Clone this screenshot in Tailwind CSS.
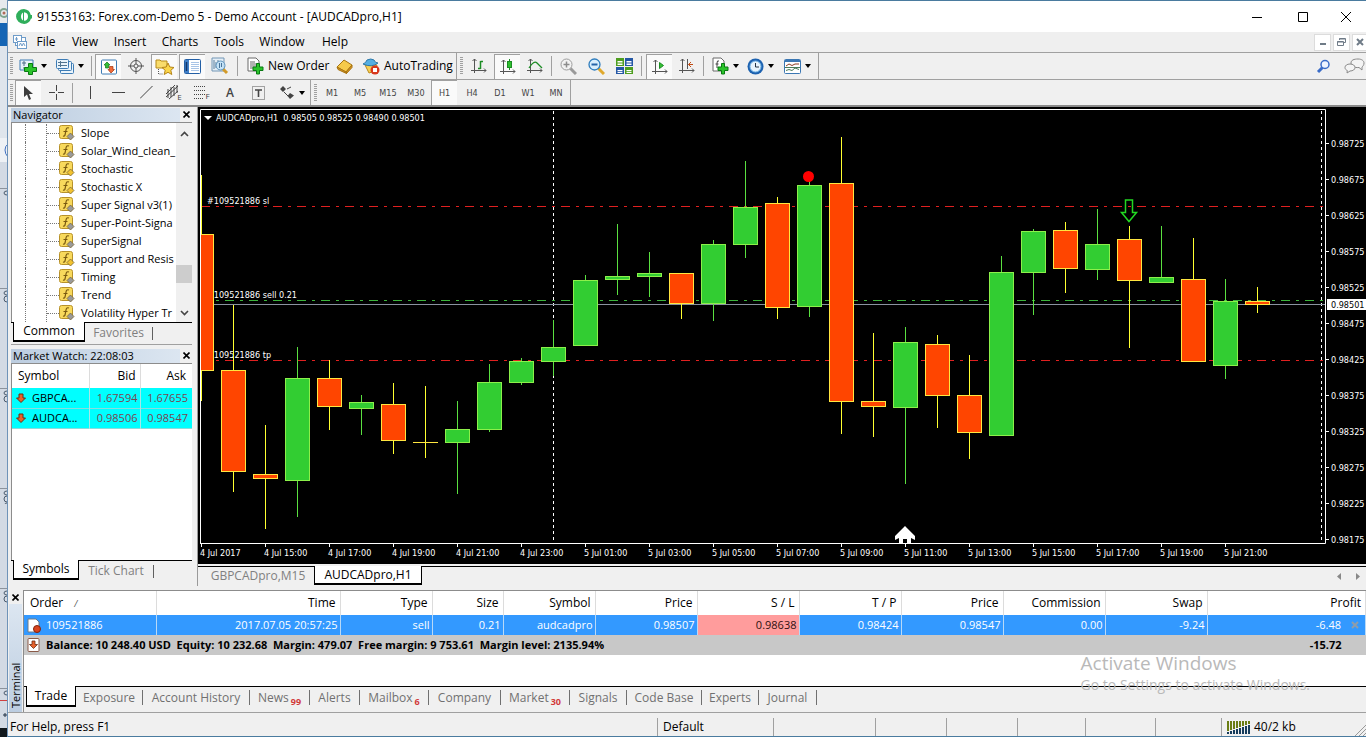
<!DOCTYPE html>
<html lang="en">
<head>
<meta charset="utf-8">
<title>91553163: Forex.com-Demo 5 - Demo Account - [AUDCADpro,H1]</title>
<script src="https://cdn.jsdelivr.net/npm/@tailwindcss/browser@4"></script>
</head>
<body class="flex min-h-screen bg-[#f0f0f0] font-['Open_Sans','Noto_Sans',sans-serif] text-[12px] leading-4 text-black">

<!-- Edge of the window behind -->
<div class="relative w-2 shrink-0 overflow-hidden border-r border-[#6f93b8] bg-[#d3dae4]">
  <svg class="absolute inset-0" width="8" height="737" viewBox="0 0 8 737" aria-hidden="true">
    <rect width="8" height="23" fill="#e6eaed"/><circle cx="4" cy="13" r="4" fill="none" stroke="#7fa58f" stroke-width="2"/><circle cx="4" cy="13" r="1.5" fill="#b06a58"/>
    <rect y="23" width="8" height="23" fill="#1565b5"/><rect y="46" width="8" height="92" fill="#dfe5ec"/>
    <rect y="138" width="8" height="24" fill="#eef1f5"/><path d="M8 144q-3 2-3 6t3 7" stroke="#3f6fc0" fill="none"/>
    <path d="M0 188.500h8M0 288.500h8M0 388.500h8M0 488.500h8M0 588.500h8M0 688.500h8" stroke="#8c939c"/>
    <g fill="none" stroke="#4b5a6c"><path d="M7 191q-3 0-3 2t3 2M7 291q-3 0-3 2t3 2m0 1q-3 0-3 3t3 3M7 391q-3 0-3 2t3 2m0 1q-3 0-3 3t3 3M7 491q-3 0-3 2t3 2m0 1q-3 0-3 3t3 3m0 1q-2 0-2 1M7 591q-3 0-3 2t3 2m0 1q-3 0-3 3t3 3M7 691q-3 0-3 2t3 2"/></g>
    <path d="M0 700.500h8" stroke="#d04040"/><path d="M5 713v4M3 715h4" stroke="#234"/><rect y="728" width="8" height="9" fill="#10171c"/>
  </svg>
</div>

<div class="flex min-w-0 flex-1 flex-col border-y border-[#4a7b9f]">

  <!-- Title bar -->
  <header class="flex h-[31px] shrink-0 items-center bg-white pl-2">
    <svg class="mr-1 shrink-0" width="17" height="16" viewBox="0 0 17 16" aria-hidden="true"><path fill="#2fae5b" fill-rule="evenodd" d="M8 0a8 7.500 0 1 0 .1 15A8 7.500 0 0 0 15 9.500h1V6h-1.200A8 7.500 0 0 0 8 0zM8 3.200q4 .3 4 4.300t-4 4.300q-3-.8-3-4.300t3-4.300z"/><path fill="#2fae5b" d="M7 3h1v9H7z"/></svg>
    <h1 class="flex-1 text-[12px]">91553163: Forex.com-Demo 5 - Demo Account - [AUDCADpro,H1]</h1>
    <button aria-label="Minimize" class="flex w-[46px] justify-center"><svg width="10" height="10" stroke="#000" fill="none"><path d="M0 5.500h10"/></svg></button>
    <button aria-label="Maximize" class="flex w-[46px] justify-center"><svg width="10" height="10" stroke="#000" fill="none"><path d="M.5.500h9v9h-9z"/></svg></button>
    <button aria-label="Close" class="flex w-10 justify-center"><svg width="10" height="10" stroke="#000" fill="none"><path d="M0 0l10 10M10 0L0 10"/></svg></button>
  </header>

  <!-- Menu bar -->
  <nav class="flex h-[21px] shrink-0 items-center border-b border-[#a0a0a0] bg-[#efefef] pl-1">
    <svg width="16" height="16" viewBox="0 0 16 16" fill="#fff" stroke="#6e9cc9" aria-hidden="true"><rect x="3.500" y="3.500" width="10" height="8"/><rect x="1.500" y="1.500" width="8" height="7"/><path d="M3 5h3M4.500 3v4" fill="none"/><rect x="5.500" y="7.500" width="9" height="7"/><path d="M7 12l1.500-3 1.500 3 1.500-3 1.500 3" fill="none"/></svg>
    <button class="w-9 text-center">File</button>
    <button class="w-[42px] text-center">View</button>
    <button class="w-[48px] text-center">Insert</button>
    <button class="w-[52px] text-center">Charts</button>
    <button class="w-[46px] text-center">Tools</button>
    <button class="w-[60px] text-center">Window</button>
    <button class="w-[46px] text-center">Help</button>
    <div class="ml-auto flex gap-[2px]">
      <button aria-label="Minimize chart" class="flex h-[17px] w-[17px] items-center justify-center border border-[#dcdcdc] bg-white"><svg width="8" height="8"><path d="M1 6h6" stroke="#6f7b87" stroke-width="2"/></svg></button>
      <button aria-label="Restore chart" class="flex h-[17px] w-[17px] items-center justify-center border border-[#dcdcdc] bg-white"><svg width="9" height="8" fill="none" stroke="#6f7b87"><path d="M2.500 2V.5h6v4H7M.500 3.500h6v4h-6zM2 1h6M0 4h6"/></svg></button>
      <button aria-label="Close chart" class="flex h-[17px] w-[14px] items-center justify-center border border-r-0 border-[#dcdcdc] bg-white"><svg width="8" height="8"><path d="M1 1l6 6M7 1L1 7" stroke="#6f7b87" stroke-width="2"/></svg></button>
    </div>
  </nav>

  <!-- Main toolbar -->
  <div class="flex h-[27px] shrink-0 items-center border-b border-[#a0a0a0] bg-[#f0f0f0]">
    <div class="flex h-full items-center border-r border-[#a0a0a0]">
      <i class="ml-[2px] mr-1 h-[18px] w-[3px] bg-[repeating-linear-gradient(#a0a0a0_0_1px,transparent_1px_2px)]"></i>
      <button aria-label="New chart" class="flex w-[34px] items-center gap-1 pl-[2px]"><svg width="18" height="17" viewBox="0 0 18 17"><path d="M1 2h13v10H1z" fill="#e6f1fa" stroke="#3e7cb5"/><path d="M3 5h4M5 3v5M4 10h4" stroke="#4b6c88"/><path d="M9.500 5.500h4v4h4v4h-4v3h-4v-3h-4v-4h4z" fill="#2bc32b" stroke="#087a12"/></svg><svg width="6" height="4"><path d="M0 0h6L3 4z"/></svg></button>
      <button aria-label="Profiles" class="flex w-[38px] items-center gap-1 pl-[5px]"><svg width="18" height="17" viewBox="0 0 18 17" fill="#eaf4fb" stroke="#3e7cb5"><rect x="4.500" y="5.500" width="13" height="10" rx="1"/><rect x="2.500" y="3.500" width="13" height="9" rx="1"/><rect x=".5" y="1.500" width="12" height="9" rx="1"/><path d="M2 4.500h9M2 7.500h9M4.500 3v6" stroke="#537590"/></svg><svg width="6" height="4"><path d="M0 0h6L3 4z"/></svg></button>
      <i class="mx-[2px] h-5 w-px bg-[#a0a0a0]"></i>
      <button aria-label="Market Watch" aria-pressed="true" class="mx-px flex h-[25px] w-[26px] items-center justify-center border-l border-t border-[#a0a0a0] bg-[#fafafa]"><svg width="16" height="16" viewBox="0 0 16 16"><rect x=".5" y="1" width="15" height="14" rx="1" fill="#fff" stroke="#3e7cb5"/><path d="M6 3l3 3H7.500v3h-3V6H3z" fill="#35bf35" stroke="#11761a" stroke-width=".7"/><path d="M10 14l3.500-3.500H12v-3H8.500v3H7z" fill="#f06b3a" stroke="#a0320d" stroke-width=".7"/></svg></button>
      <button aria-label="Data Window" class="flex w-7 justify-center"><svg width="16" height="16" viewBox="0 0 16 16" fill="none" stroke="#555"><circle cx="8" cy="8" r="5.500"/><circle cx="8" cy="8" r="2"/><path d="M8 0v6M8 10v6M0 8h6M10 8h6"/></svg></button>
      <button aria-label="Navigator" aria-pressed="true" class="mx-px flex h-[25px] w-[26px] items-center justify-center border-l border-t border-[#a0a0a0] bg-[#fafafa]"><svg width="20" height="18" viewBox="0 0 20 18"><path d="M1 2h4l1 1h6v7H1z" fill="#f9dc6b" stroke="#b58a1b"/><path d="M3.500 11v5H8" stroke="#555" stroke-dasharray="1 1" fill="none"/><path d="M13 5l1.800 4 4.200.5-3.200 2.800 1 4.200-3.800-2.200-3.800 2.200 1-4.200L7 9.500l4.200-.5z" fill="#fbd64a" stroke="#b58518"/></svg></button>
      <button aria-label="Terminal" aria-pressed="true" class="mx-px flex h-[25px] w-[26px] items-center justify-center border-l border-t border-[#a0a0a0] bg-[#fafafa]"><svg width="17" height="15" viewBox="0 0 17 15"><rect x=".5" y=".5" width="16" height="14" rx="1" fill="#fff" stroke="#235fa5"/><path d="M1 1h4v13H1z" fill="#3f7fc8"/><path d="M2.500 3v9" stroke="#12376b" stroke-width="1.500"/><path d="M7 3.500h8M7 5.500h8M7 7.500h8M7 9.500h8M7 11.500h8" stroke="#a8c4e6"/></svg></button>
      <button aria-label="Strategy Tester" class="flex w-7 justify-center"><svg width="18" height="18" viewBox="0 0 18 18"><path d="M1 1h12v13H1z" fill="#e4eef6" stroke="#7396b5"/><path d="M3 3v9M5 5v6M7 3v4" stroke="#5b7e9c"/><path d="M12 12l4 4" stroke="#d39b2a" stroke-width="3"/><circle cx="9.500" cy="8.500" r="4.500" fill="#bfe0f7" fill-opacity=".85" stroke="#5f94bd"/><path d="M8.500 6v5M10.500 6v4" stroke="#49749a"/></svg></button>
      <i class="mx-[3px] h-5 w-px bg-[#a0a0a0]"></i>
      <button class="flex w-[89px] items-center gap-1 whitespace-nowrap pl-[6px]"><svg class="shrink-0" width="17" height="18" viewBox="0 0 17 18"><path d="M1 1h8l3 3v10H1z" fill="#fff" stroke="#6b6b6b"/><path d="M3 5h5M3 7h7M3 9h6M3 11h4" stroke="#666"/><path d="M9.500 6.500h3v3.500h3.500v3.500h-3.500V17h-3v-3.500H6V10h3.500z" fill="#2bc32b" stroke="#087a12"/></svg>New Order</button>
      <button aria-label="MetaEditor" class="flex w-7 justify-center"><svg width="17" height="15" viewBox="0 0 17 15"><path d="M1 8L8 1l8 5-6 7z" fill="#f6ca4b" stroke="#a87412"/><path d="M1 8l1 2.500L10.500 14.500 10 13zM10.500 14.500l5.500-6V6L10 13z" fill="#d59422" stroke="#a87412"/></svg></button>
      <button class="flex w-[98px] items-center gap-1 whitespace-nowrap pl-1"><svg class="shrink-0" width="18" height="17" viewBox="0 0 18 17"><path d="M3 7l12 0-2 6-6 2z" fill="#f7cf52" stroke="#b98a1d"/><path d="M1 6q3-1 4-4 4-2 7 0 1 3 4 3-6 5-15 1z" fill="#54aee2" stroke="#2d78a8"/><circle cx="13" cy="12" r="4.500" fill="#d8371d"/><rect x="11" y="10" width="4" height="4" fill="#fff"/></svg>AutoTrading</button>
    </div>
    <div class="flex h-full items-center border-r border-[#a0a0a0]">
      <i class="ml-[3px] mr-[2px] h-[18px] w-[3px] bg-[repeating-linear-gradient(#a0a0a0_0_1px,transparent_1px_2px)]"></i>
      <button aria-label="Bar chart" class="flex w-7 justify-center"><svg width="16" height="16" fill="none" stroke="#555"><path d="M3.500 1v14M0 12.500h15M1.500 3l2-2 2 2M13 10.500l2 2-2 2"/><path d="M9.500 3v8M9.500 3.500H12M7 10.500h2.500" stroke="#1c8c24" stroke-width="1.500"/></svg></button>
      <button aria-label="Candlesticks" aria-pressed="true" class="mx-px flex h-[25px] w-[26px] items-center justify-center border-l border-t border-[#a0a0a0] bg-[#fafafa]"><svg width="16" height="16" fill="none" stroke="#555"><path d="M3.500 1v14M0 12.500h15M1.500 3l2-2 2 2M13 10.500l2 2-2 2"/><path d="M9.500 0v11" stroke="#1c8c24"/><rect x="7.500" y="2.500" width="4" height="6" fill="#2fc02f" stroke="#1c8c24"/></svg></button>
      <button aria-label="Line chart" class="flex w-7 justify-center"><svg width="16" height="16" fill="none" stroke="#555"><path d="M3.500 1v14M0 12.500h15M1.500 3l2-2 2 2M13 10.500l2 2-2 2"/><path d="M2 10q5-8 8-5l5 5" stroke="#1c8c24" stroke-width="1.300"/></svg></button>
      <i class="mx-[2px] h-5 w-px bg-[#a0a0a0]"></i>
      <button aria-label="Zoom in" class="flex w-7 justify-center"><svg width="17" height="17" fill="none"><path d="M10 10l6 6" stroke="#9a9a9a" stroke-width="3"/><circle cx="6.500" cy="6.500" r="5.500" fill="#f2f2f2" stroke="#9d9d9d"/><path d="M3.500 6.500h6M6.500 3.500v6" stroke="#8c8c8c" stroke-width="1.500"/></svg></button>
      <button aria-label="Zoom out" class="flex w-7 justify-center"><svg width="17" height="17" fill="none"><path d="M10 10l6 6" stroke="#e0a92d" stroke-width="3"/><circle cx="6.500" cy="6.500" r="5.500" fill="#d9eefc" stroke="#2f7dbd" stroke-width="1.300"/><path d="M3.500 6.500h6" stroke="#2464a8" stroke-width="2"/></svg></button>
      <button aria-label="Tile windows" class="flex w-7 justify-center"><svg width="17" height="17"><path d="M0 0h8v8H0zM9 9h8v7H9z" fill="#4e9e1f"/><path d="M9 0h8v8H9zM0 9h8v7H0z" fill="#2457a5"/><path d="M1.500 3h5v1.500h-5zM1.500 5.500h5V7h-5zM10.500 3h5v1.500h-5zM10.500 5.500h5V7h-5zM1.500 12h5v1.300h-5zM1.500 14h5v1h-5zM10.500 12h5v1.300h-5zM10.500 14h5v1h-5z" fill="#fff"/></svg></button>
      <i class="mx-[3px] h-5 w-px bg-[#a0a0a0]"></i>
      <button aria-label="Auto scroll" aria-pressed="true" class="mx-px flex h-[25px] w-[26px] items-center justify-center border-l border-t border-[#a0a0a0] bg-[#fafafa]"><svg width="16" height="16" fill="none" stroke="#555"><path d="M3.500 1v14M0 12.500h15M1.500 3l2-2 2 2M13 10.500l2 2-2 2"/><path d="M7.500 3.500v6l4-3z" fill="#35c035" stroke="#1c8c24"/></svg></button>
      <button aria-label="Chart shift" class="flex w-7 justify-center"><svg width="16" height="16" fill="none" stroke="#555"><path d="M3.500 1v14M0 12.500h15M1.500 3l2-2 2 2M13 10.500l2 2-2 2M8.500 1v10"/><path d="M9.500 6.500H14M12 4L9.500 6.500 12 9" stroke="#c04a12"/></svg></button>
      <i class="mx-[2px] h-5 w-px bg-[#a0a0a0]"></i>
      <button aria-label="Indicators" class="flex w-[37px] items-center gap-1 pl-[6px]"><svg width="17" height="18" viewBox="0 0 17 18"><path d="M1 1h8l3 3v10H1z" fill="#fff" stroke="#6b6b6b"/><path d="M7 4q-2-1-2 2v5M3.500 7h3" stroke="#444" fill="none"/><path d="M9.500 6.500h3v3.500h3.500v3.500h-3.500V17h-3v-3.500H6V10h3.500z" fill="#2bc32b" stroke="#087a12"/></svg><svg width="6" height="4"><path d="M0 0h6L3 4z"/></svg></button>
      <button aria-label="Periods" class="flex w-[37px] items-center gap-1 pl-1"><svg width="17" height="17"><circle cx="8.500" cy="8.500" r="8" fill="#1d62b0"/><circle cx="8.500" cy="8.500" r="5.500" fill="#e6f4fd" stroke="#77b7e8"/><path d="M8.500 5v4H12" fill="none" stroke="#234"/></svg><svg width="6" height="4"><path d="M0 0h6L3 4z"/></svg></button>
      <button aria-label="Templates" class="flex w-[38px] items-center gap-1 pl-1"><svg width="17" height="15"><rect x=".5" y=".5" width="16" height="14" rx="1" fill="#fff" stroke="#3b77b3"/><path d="M1 1h15v2H1z" fill="#3b77b3"/><path d="M2 7l3-2 3 1.500L11 5h4" fill="none" stroke="#8a3b1e"/><path d="M2 11.500l3-1 3 1L11 9l4 1.500M1 8.500h15" fill="none" stroke="#487b57"/></svg><svg width="6" height="4"><path d="M0 0h6L3 4z"/></svg></button>
    </div>
    <div class="ml-auto flex items-center gap-3">
      <button aria-label="Search"><svg width="15" height="15" fill="none"><path d="M6.500 8.500L2 13" stroke="#3a6cc8" stroke-width="3"/><circle cx="9" cy="5.500" r="4" fill="#eef4ff" stroke="#3a6cc8" stroke-width="1.500"/></svg></button>
      <button aria-label="Chat"><svg width="23" height="16" fill="#f4f4f4" stroke="#8a8a8a"><path d="M15 1c4 0 6 2 6 4s-1 3-2 4v3l-3-2.500C11 10 8 8 8 5s3-4 7-4z"/><path d="M7 6c3 0 5 1.500 5 3.500S10 13 7 13l-3 2 .300-2.500C3 12 2 11 2 9.500 2 7.500 4 6 7 6z"/></svg></button>
    </div>
  </div>

  <!-- Drawing and timeframe toolbar -->
  <div class="flex h-[27px] shrink-0 items-center border-b-2 border-[#8a8a8a] bg-[#f0f0f0] text-[#444]">
    <div class="flex h-full items-center border-r border-[#a0a0a0]">
      <i class="ml-[2px] mr-px h-[18px] w-[3px] bg-[repeating-linear-gradient(#a0a0a0_0_1px,transparent_1px_2px)]"></i>
      <button aria-label="Cursor" aria-pressed="true" class="mx-px flex h-[25px] w-[26px] items-center justify-center border-l border-t border-[#a0a0a0] bg-[#fafafa]"><svg width="9" height="15"><path d="M0 0v11l3-2.500 2 5.500 2-1-2-5h4z" fill="#3d3d3d"/></svg></button>
      <button aria-label="Crosshair" class="flex w-7 justify-center"><svg width="15" height="15" stroke="#444"><path d="M7.500 0v6M7.500 9v6M0 7.500h6M9 7.500h6"/></svg></button>
      <i class="ml-[2px] mr-[3px] h-5 w-px bg-[#a0a0a0]"></i>
      <button aria-label="Vertical line" class="flex w-7 justify-center"><svg width="13" height="13" stroke="#444"><path d="M6.500 0v13"/></svg></button>
      <button aria-label="Horizontal line" class="flex w-7 justify-center"><svg width="13" height="13" stroke="#444"><path d="M0 6.500h13"/></svg></button>
      <button aria-label="Trendline" class="flex w-7 justify-center"><svg width="13" height="13" stroke="#444"><path d="M0 12.500L12.500 0"/></svg></button>
      <button aria-label="Equidistant channel" class="flex w-7 items-end justify-center"><svg width="12" height="15" fill="none" stroke="#444"><path d="M0 9L9 0M0 12L12 1M3 14l9-8M2 4v9M5 2v10M8 2v9M11 0v8"/></svg><span class="-ml-px -mb-[3px] text-[8px] leading-3">E</span></button>
      <button aria-label="Fibonacci retracement" class="flex w-7 items-end justify-center"><svg width="12" height="13" stroke="#444" stroke-dasharray="1 1"><path d="M0 .5h12M0 4.500h12M0 8.500h12M0 12.500h9"/></svg><span class="-ml-px -mb-[3px] text-[8px] leading-3">F</span></button>
      <button aria-label="Text" class="w-7 text-center text-[12px] font-semibold">A</button>
      <button aria-label="Text label" class="flex w-7 justify-center"><svg width="13" height="14" fill="none"><rect x=".5" y=".5" width="12" height="13" stroke="#555" stroke-dasharray="1 1"/><path d="M3 4h7M6.500 4v7" stroke="#444" stroke-width="1.600"/></svg></button>
      <button aria-label="Arrows" class="flex w-[38px] items-center gap-1 pl-2"><svg width="15" height="13" fill="#444"><path d="M3 0l3 3-3 3-3-3zM10 7l4 2.500L10 13 7.500 10z"/><path d="M4 6l4 4M7 3l4-2" stroke="#444"/></svg><svg width="6" height="4"><path d="M0 0h6L3 4z"/></svg></button>
    </div>
    <div class="flex h-full items-center border-r border-[#a0a0a0] font-['DejaVu_Sans_Condensed','DejaVu_Sans',sans-serif] text-[9px]">
      <i class="ml-[3px] mr-px h-[18px] w-[3px] bg-[repeating-linear-gradient(#a0a0a0_0_1px,transparent_1px_2px)]"></i>
      <button class="w-7 text-center">M1</button><button class="w-7 text-center">M5</button><button class="w-7 text-center">M15</button><button class="w-7 text-center">M30</button>
      <button aria-pressed="true" class="mx-px h-[25px] w-[26px] border-l border-t border-[#a0a0a0] bg-[#fafafa] text-center">H1</button>
      <button class="w-7 text-center">H4</button><button class="w-7 text-center">D1</button><button class="w-7 text-center">W1</button><button class="w-7 text-center">MN</button>
    </div>
  </div>

  <!-- Side panels and chart -->
  <div class="flex shrink-0">
    <aside class="flex w-[190px] shrink-0 flex-col border-r border-[#9a9a9a] pl-[3px] pr-[5px]">
      <section class="border-b border-[#a0a0a0] pb-[2px]">
        <div class="flex h-[15px] items-center">
          <h2 class="flex-1 bg-linear-to-r from-[#bccde0] to-[#dce6f1] pl-[2px] text-[11px] leading-[14px]">Navigator</h2>
          <button aria-label="Close Navigator" class="flex w-3 justify-center"><svg width="7" height="7"><path d="M.5.500l6 6M6.500.500l-6 6" stroke="#000" stroke-width="1.600"/></svg></button>
        </div>
        <div class="flex border-l border-t border-[#8c8c8c] bg-white">
          <ul id="tree" class="h-[199px] min-w-0 flex-1 overflow-hidden pt-px text-[11px]"></ul>
          <div class="flex w-4 flex-col items-center bg-[#f0f0f0]">
            <svg class="mt-2" width="9" height="6"><path d="M1 5l3.500-3.500L8 5" fill="none" stroke="#444" stroke-width="1.600"/></svg>
            <div class="mt-32 h-[18px] w-full bg-[#cdcdcd]"></div>
            <svg class="mb-[6px] mt-auto" width="9" height="6"><path d="M1 1l3.500 3.500L8 1" fill="none" stroke="#444" stroke-width="1.600"/></svg>
          </div>
        </div>
        <div class="flex h-5 border-t border-black">
          <button class="-mt-px ml-[2px] w-[72px] border border-t-0 border-b-2 border-black bg-white">Common</button>
          <button class="w-[67px] text-center text-[#808080]">Favorites</button><i class="mt-1 h-[13px] w-px bg-[#606060]"></i>
        </div>
      </section>
      <section class="mt-[3px] flex flex-1 flex-col">
        <div class="flex h-[15px] items-center">
          <h2 class="flex-1 bg-linear-to-r from-[#bccde0] to-[#dce6f1] pl-[2px] text-[11px] leading-[14px]">Market Watch: 22:08:03</h2>
          <button aria-label="Close Market Watch" class="flex w-3 justify-center"><svg width="7" height="7"><path d="M.5.500l6 6M6.500.500l-6 6" stroke="#000" stroke-width="1.600"/></svg></button>
        </div>
        <div class="flex-1 border-l border-t border-[#8c8c8c] bg-white">
          <table class="w-full table-fixed">
            <colgroup><col class="w-[77px]"><col class="w-[51px]"><col></colgroup>
            <thead><tr class="h-6"><th class="border-r border-[#dcdcdc] pl-1.5 text-left font-normal">Symbol</th><th class="border-r border-[#dcdcdc] pr-1 text-right font-normal">Bid</th><th class="pr-[6px] text-right font-normal">Ask</th></tr></thead>
            <tbody class="bg-[#00ffff] text-[11px]">
              <tr class="h-5 border-b border-[#8adcdc]"><td class="border-r border-[#a8e6e6] pl-1"><span class="flex items-center gap-1.5 whitespace-nowrap"><svg class="shrink-0" width="10" height="10"><path d="M3 1h4v4h2.500L5 9.500.500 5H3z" fill="#e8622c" stroke="#6b2c12"/></svg>GBPCA...</span></td><td class="border-r border-[#a8e6e6] pr-0.5 text-right text-[#7a4550]">1.67594</td><td class="pr-1 text-right text-[#7a4550]">1.67655</td></tr>
              <tr class="h-5 border-b border-[#8adcdc]"><td class="border-r border-[#a8e6e6] pl-1"><span class="flex items-center gap-1.5 whitespace-nowrap"><svg class="shrink-0" width="10" height="10"><path d="M3 1h4v4h2.500L5 9.500.500 5H3z" fill="#e8622c" stroke="#6b2c12"/></svg>AUDCA...</span></td><td class="border-r border-[#a8e6e6] pr-0.5 text-right text-[#7a4550]">0.98506</td><td class="pr-1 text-right text-[#7a4550]">0.98547</td></tr>
            </tbody>
          </table>
        </div>
        <div class="mb-[6px] flex h-5 border-t border-black">
          <button class="-mt-px ml-[2px] w-[66px] border border-t-0 border-b-2 border-black bg-white">Symbols</button>
          <button class="w-[74px] text-center text-[#808080]">Tick Chart</button><i class="mt-1 h-[13px] w-px bg-[#606060]"></i>
        </div>
      </section>
    </aside>

    <main class="min-w-0 flex-1">
      <svg id="chart" class="block h-auto w-full bg-black font-['DejaVu_Sans_Condensed','DejaVu_Sans',sans-serif] text-[9px]" viewBox="198 107 1168 457" fill="none" role="img" aria-label="AUDCADpro H1 candlestick chart"></svg>
      <div class="mt-[2px] flex h-5 items-start border-t border-black text-[#808080]">
        <button class="w-[116px] pl-1 text-center leading-[18px]">GBPCADpro,M15</button>
        <button class="-mt-px h-[19px] w-[108px] border border-t-0 border-b-2 border-black bg-white text-center text-black">AUDCADpro,H1</button>
        <span class="ml-auto flex gap-[15px] pr-1.5 pt-1.5"><svg width="4" height="7"><path d="M4 0v7L0 3.500z" fill="#888"/></svg><svg width="4" height="7"><path d="M0 0v7l4-3.500z" fill="#888"/></svg></span>
      </div>
    </main>
  </div>

  <!-- Terminal -->
  <section class="mt-1 flex flex-1">
    <div class="flex w-[15px] shrink-0 flex-col items-center">
      <button aria-label="Close Terminal" class="flex h-[14px] items-center"><svg width="7" height="7"><path d="M.5.500l6 6M6.500.500l-6 6" stroke="#000" stroke-width="1.600"/></svg></button>
      <h2 class="flex w-[13px] flex-1 rotate-180 items-center bg-linear-to-t from-[#dce6f1] to-[#bccde0] pt-1 text-[11px] leading-[13px] [writing-mode:vertical-rl]">Terminal</h2>
    </div>
    <div class="relative flex min-w-0 flex-1 flex-col border-l border-t border-[#8c8c8c] bg-white">
      <table class="w-full table-fixed">
        <colgroup><col class="w-[132px]"><col class="w-[184px]"><col class="w-[92px]"><col class="w-[71px]"><col class="w-[92px]"><col class="w-[102px]"><col class="w-[102px]"><col class="w-[102px]"><col class="w-[102px]"><col class="w-[102px]"><col class="w-[102px]"><col></colgroup>
        <thead>
          <tr class="h-6 text-right *:border-r *:border-[#dcdcdc] *:pr-1 *:font-normal"><th class="pl-1.5 text-left">Order <span class="ml-2 text-[9px] italic text-[#555]">/</span></th><th>Time</th><th>Type</th><th>Size</th><th>Symbol</th><th>Price</th><th>S / L</th><th>T / P</th><th>Price</th><th>Commission</th><th>Swap</th><th>Profit</th></tr>
        </thead>
        <tbody>
          <tr class="h-5 bg-[#3399ff] text-right text-[11px] text-white *:border-r *:border-[#b8d9f7] *:pr-0.5">
            <td><span class="flex items-center gap-[5px] pl-[3px]"><svg width="14" height="15"><path d="M1 1h8l3 3v10H1z" fill="#fff" stroke="#6d7a88"/><circle cx="10" cy="11" r="3.500" fill="#d9441f" stroke="#82240c"/></svg>109521886</span></td><td>2017.07.05 20:57:25</td><td>sell</td><td>0.21</td><td>audcadpro</td><td>0.98507</td><td class="bg-[#ff9c9c] text-[#301010]">0.98638</td><td>0.98424</td><td>0.98547</td><td>0.00</td><td>-9.24</td>
            <td><span class="flex items-center justify-end gap-2.5 pr-1">-6.48<button aria-label="Close order"><svg width="8" height="8"><path d="M1 1l6 6M7 1L1 7" stroke="#8f9dab" stroke-width="2"/></svg></button></span></td>
          </tr>
          <tr class="h-5 bg-[#c8c8c8] text-[11px] font-bold"><td colspan="11"><span class="flex items-center gap-[5px] whitespace-pre pl-[3px]"><svg width="14" height="14"><rect x="1" y=".5" width="11" height="13" rx="1" fill="#fff" stroke="#8a5a48"/><path d="M5 3h3v3.500h2.500l-4 4-4-4H5z" fill="#e8622c" stroke="#6b2c12" stroke-width=".8"/></svg>Balance: 10 248.40 USD  Equity: 10 232.68  Margin: 479.07  Free margin: 9 753.61  Margin level: 2135.94%</span></td><td class="pr-6 text-right">-15.72</td></tr>
        </tbody>
      </table>
      <div class="flex-1"></div>
      <div class="flex h-[26px] items-start border-t border-black bg-[#f0f0f0] text-[#707070]">
        <button class="-mt-px ml-[2px] h-[21px] w-[50px] border border-t-0 border-b-2 border-black bg-white text-center text-black">Trade</button>
        <button class="mt-[3px] w-[67px] border-r border-[#707070] text-center leading-[15px]">Exposure</button>
        <button class="mt-[3px] w-[107px] border-r border-[#707070] text-center leading-[15px]">Account History</button>
        <button class="mt-[3px] flex h-[15px] w-[60px] justify-center border-r border-[#707070] leading-[15px]">News<span class="pl-[2px] pt-1 text-[9px] font-bold text-[#d23a3a]">99</span></button>
        <button class="mt-[3px] w-[50px] border-r border-[#707070] text-center leading-[15px]">Alerts</button>
        <button class="mt-[3px] flex h-[15px] w-[69px] justify-center border-r border-[#707070] leading-[15px]">Mailbox<span class="pl-[2px] pt-1 text-[9px] font-bold text-[#d23a3a]">6</span></button>
        <button class="mt-[3px] w-[72px] border-r border-[#707070] text-center leading-[15px]">Company</button>
        <button class="mt-[3px] flex h-[15px] w-[69px] justify-center border-r border-[#707070] leading-[15px]">Market<span class="pl-[2px] pt-1 text-[9px] font-bold text-[#d23a3a]">30</span></button>
        <button class="mt-[3px] w-[57px] border-r border-[#707070] text-center leading-[15px]">Signals</button>
        <button class="mt-[3px] w-[75px] border-r border-[#707070] text-center leading-[15px]">Code Base</button>
        <button class="mt-[3px] w-[57px] border-r border-[#707070] text-center leading-[15px]">Experts</button>
        <button class="mt-[3px] w-[58px] border-r border-[#707070] text-center leading-[15px]">Journal</button>
      </div>
      <div class="pointer-events-none absolute bottom-[17px] right-14 whitespace-nowrap text-[#b9b9b9]"><p class="text-[19px] leading-6">Activate Windows</p><p class="text-[14px] leading-5">Go to Settings to activate Windows.</p></div>
    </div>
  </section>

  <!-- Status bar -->
  <footer class="flex h-6 shrink-0 items-end border-t border-[#a0a0a0] bg-[#f0f0f0] leading-[18px]">
    <p class="flex-1 pl-[2px]">For Help, press F1</p>
    <p class="h-[18px] w-[116px] border-l border-[#a0a0a0] pl-[5px]">Default</p>
    <i class="h-[18px] w-[102px] border-l border-[#a0a0a0]"></i><i class="h-[18px] w-[71px] border-l border-[#a0a0a0]"></i><i class="h-[18px] w-[71px] border-l border-[#a0a0a0]"></i><i class="h-[18px] w-[68px] border-l border-[#a0a0a0]"></i><i class="h-[18px] w-[70px] border-l border-[#a0a0a0]"></i><i class="h-[18px] w-[66px] border-l border-[#a0a0a0]"></i>
    <div class="flex h-[18px] w-[145px] items-center gap-1 border-l border-[#a0a0a0] pl-[5px]">
      <svg width="23" height="13"><path d="M1 0v10M4 0v9M7 0v8M10 0v7M13 0v6M16 0v5M19 0v4M22 0v3" stroke="#6a7d14" stroke-width="2"/><path d="M1 11v2M4 10v3M7 9v4M10 8v5M13 7v6M16 6v7M19 5v8M22 4v9" stroke="#163c5c" stroke-width="2"/></svg>40/2 kb
      <svg class="ml-auto self-end" width="11" height="11"><path d="M0 11L11 0M4 11l7-7M8 11l3-3" stroke="#999"/></svg>
    </div>
  </footer>
</div>

<script>
// Navigator tree: [indicator name, marker colour]
const gray = '#9a9a9a', gold = '#f2c230';
document.getElementById('tree').innerHTML = [
  ['Slope', gray], ['Solar_Wind_clean_', gray], ['Stochastic', gold], ['Stochastic X', gold], ['Super Signal v3(1)', gray],
  ['Super-Point-Signa', gray], ['SuperSignal', gray], ['Support and Resis', gold], ['Timing', gray], ['Trend', gray], ['Volatility Hyper Tr', gray]
].map(([name, c]) => `<li class="flex h-[18px] items-center whitespace-nowrap"><i class="ml-[13px] h-full w-[21px] shrink-0 border-l border-dotted border-[#777]"></i><i class="flex h-full w-[13px] shrink-0 items-center border-l border-dotted border-[#777]"><i class="h-px w-full border-t border-dotted border-[#777]"></i></i><svg class="mr-1.5 shrink-0" width="16" height="16"><rect x=".5" y=".5" width="13" height="13" rx="2" fill="#f8d95c" stroke="#b8922a"/><path d="M10 3q-2.500-1-3 2l-1 5q-.4 1.500-2 1M4.500 6.500h4" fill="none" stroke="#7a5a10" stroke-width="1.200"/><path d="M11.500 8l3.500 3.500-3.500 3.500L8 11.500z" fill="${c}" stroke="#77663a" stroke-width=".8"/></svg>${name}</li>`).join('');

// Candles, one per hour: [rising, body top, body bottom, high, low]
const candles = [[0,234,371,175,401],[0,370,472,305,492],[0,474,479,425,529],[1,378,481,347,517],[0,378,407,360,430],[1,402,409,395,435],[0,404,441,383,454],[0,442,442,386,458],[1,429,443,401,494],[1,382,430,364,432],[1,361,383,358,385],[1,347,362,320,376],[1,280,346,275,346],[1,276,280,224,295],[1,273,277,252,297],[0,273,304,273,319],[1,244,304,240,321],[1,207,245,161,258],[0,203,308,197,319],[1,185,307,180,317],[0,183,402,137,434],[0,401,407,333,437],[1,342,408,327,484],[0,344,396,335,428],[0,395,433,355,459],[1,272,436,256,436],[1,231,273,229,315],[0,230,269,222,293],[1,244,270,209,280],[0,239,281,226,348],[1,277,283,226,283],[0,279,362,238,362],[1,301,366,279,379],[0,301,305,287,313]];
let s = '<path d="M553.5 111V543M1321.500 111V543" stroke="#fff" stroke-dasharray="3 3"/>'
  + '<path d="M201 206.500H1325M201 360.500H1325" stroke="#e02020" stroke-dasharray="9 6 3 6"/>'
  + '<path d="M201 300.500H1325" stroke="#3cb43c" stroke-dasharray="9 6 3 6"/>'
  + '<path d="M201 304.500H1325" stroke="#8a93a0"/>'
  + '<g fill="#fff"><text x="207" y="204">#109521886 sl</text><text x="207" y="298">#109521886 sell 0.21</text><text x="207" y="358">#109521886 tp</text></g>'
  + '<clipPath id="plot"><path d="M201 110H1325V543H201z"/></clipPath><g clip-path="url(#plot)">';
candles.forEach(([up, top, bottom, high, low], i) => {
  const x = 201.5 + 32 * i, edge = up ? '#8cf04a' : '#ffe640';
  s += `<path d="M${x} ${high}V${low}" stroke="${up ? '#5ae040' : '#ffff30'}"/>`;
  s += top === bottom
    ? `<path d="M${x - 12.5} ${top + .5}h25" stroke="${edge}"/>`
    : `<rect x="${x - 12}" y="${top + .5}" width="24" height="${bottom - top - 1}" fill="${up ? '#32cd32' : '#ff4500'}" stroke="${edge}"/>`;
});
s += '</g><path d="M200.5 543V109.500H1325.500V543.500H200" stroke="#fff"/><path d="M204 116h8l-4 4z" fill="#fff"/><text x="216" y="121" fill="#fff" xml:space="preserve">AUDCADpro,H1  0.98505 0.98525 0.98490 0.98501</text>'
  + '<circle cx="808.5" cy="176.500" r="5.500" fill="#f00"/>'
  + '<path d="M1125.500 200h7v12.500h4l-7.500 9-7.500-9h4z" stroke="#22d822" stroke-width="1.500"/>'
  + '<path d="M905 526l10 10v4l-4-2v5h-4v-4h-4v4h-4v-5l-4 2v-4z" fill="#fff"/>';
for (let i = 0; i < 12; i++) {
  const y = 143 + 36 * i;
  s += `<path d="M1326 ${y + .5}h3" stroke="#fff"/><text x="1331" y="${y + 4}" fill="#fff">${(0.98725 - i * .0005).toFixed(5)}</text>`;
}
s += '<path d="M1327 299h39v11h-39z" fill="#fff"/><text x="1331" y="308" fill="#000">0.98501</text>';
['4 Jul 2017','4 Jul 15:00','4 Jul 17:00','4 Jul 19:00','4 Jul 21:00','4 Jul 23:00','5 Jul 01:00','5 Jul 03:00','5 Jul 05:00','5 Jul 07:00','5 Jul 09:00','5 Jul 11:00','5 Jul 13:00','5 Jul 15:00','5 Jul 17:00','5 Jul 19:00','5 Jul 21:00'].forEach((t, i) => {
  s += `<path d="M${201.5 + 64 * i} 544v3" stroke="#fff"/><text x="${200 + 64 * i}" y="556" fill="#fff">${t}</text>`;
});
document.getElementById('chart').innerHTML = s;
</script>
</body>
</html>
